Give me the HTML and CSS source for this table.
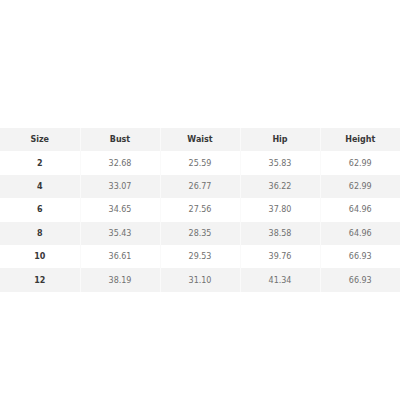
FILE: index.html
```html
<!DOCTYPE html>
<html>
<head>
<meta charset="utf-8">
<link rel="stylesheet" href="styles.css">
</head>
<body>
<table class="size-table">
  <thead>
    <tr><th>Size</th><th>Bust</th><th>Waist</th><th>Hip</th><th>Height</th></tr>
  </thead>
  <tbody>
    <tr><th>2</th><td>32.68</td><td>25.59</td><td>35.83</td><td>62.99</td></tr>
    <tr><th>4</th><td>33.07</td><td>26.77</td><td>36.22</td><td>62.99</td></tr>
    <tr><th>6</th><td>34.65</td><td>27.56</td><td>37.80</td><td>64.96</td></tr>
    <tr><th>8</th><td>35.43</td><td>28.35</td><td>38.58</td><td>64.96</td></tr>
    <tr><th>10</th><td>36.61</td><td>29.53</td><td>39.76</td><td>66.93</td></tr>
    <tr><th>12</th><td>38.19</td><td>31.10</td><td>41.34</td><td>66.93</td></tr>
  </tbody>
</table>
</body>
</html>
```
FILE: styles.css
```css
html, body {
  margin: 0;
  padding: 0;
  background: #ffffff;
}
body {
  padding-top: 128px;
  font-family: "DejaVu Sans", Verdana, sans-serif;
  font-size: 8px;
}
.size-table {
  width: 400px;
  border-collapse: collapse;
  table-layout: fixed;
}
.size-table th,
.size-table td {
  height: 23.4px;
  padding: 0;
  text-align: center;
  vertical-align: middle;
}
.size-table th + th,
.size-table th + td,
.size-table td + td {
  border-left: 1px solid #fafafa;
}
.size-table th {
  color: #383838;
  font-weight: bold;
}
.size-table td {
  color: #707070;
  font-weight: normal;
}
.size-table thead tr,
.size-table tbody tr:nth-child(even) {
  background: #f3f3f3;
}
```
